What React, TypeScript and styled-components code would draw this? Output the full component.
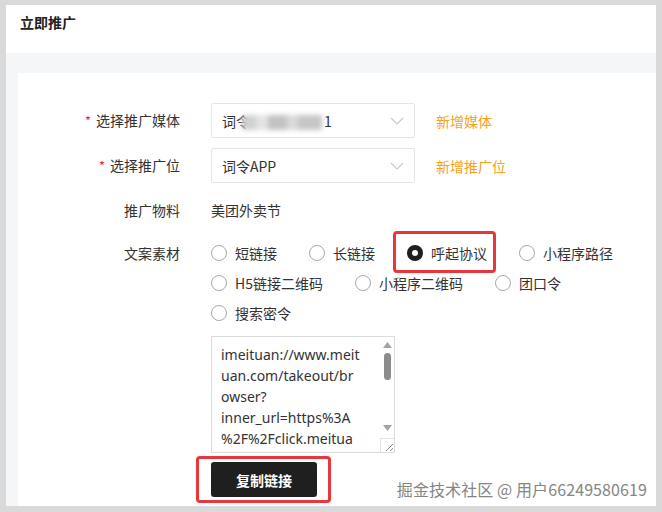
import styled, { createGlobalStyle } from 'styled-components'

const GlobalStyle = createGlobalStyle`
  html, body {
    margin: 0;
    padding: 0;
    background: #d9d9d9;
  }
  body {
    font-family: "Noto Sans CJK SC", "Noto Sans", sans-serif;
    font-size: 14px;
    color: #333;
  }
  * { box-sizing: border-box; }
`

const Window = styled.div`
  position: relative;
  margin: 5px 6px 0 6px;
  height: 501px;
  display: flex;
  flex-direction: column;
  background: #f5f6f7;
`

const Header = styled.header`
  height: 48px;
  flex: none;
  background: #fff;
  padding: 7px 0 0 14px;

  h1 {
    margin: 0;
    font-size: 14px;
    line-height: 20px;
    font-weight: 700;
    color: #222;
  }
`

const Body = styled.div`
  flex: 1;
  display: flex;
  padding: 20px 0 0 12px;
`

const Card = styled.section`
  flex: 1;
  background: #fff;
  padding-top: 30px;
`

const Form = styled.div`
  display: grid;
  grid-template-columns: 162px 1fr;
  column-gap: 31px;
  row-gap: 10px;
  align-items: start;
`

const Label = styled.div<{ $tight?: boolean }>`
  text-align: right;
  line-height: ${({ $tight }) => ($tight ? '30px' : '35px')};
  color: #333;
  white-space: nowrap;
`

const Required = styled.span`
  color: #f5222d;
  margin-right: 5px;
  font-size: 13px;
`

const Control = styled.div`
  display: flex;
  align-items: center;
  gap: 21px;
`

const Select = styled.div`
  width: 204px;
  height: 35px;
  border: 1px solid #e6e6e6;
  border-radius: 2px;
  padding: 0 10px;
  display: flex;
  align-items: center;
  justify-content: space-between;
  color: #333;
`

const Blurred = styled.span`
  display: inline-block;
  width: 80px;
  height: 15px;
  margin: 0 2px 0 -8px;
  vertical-align: middle;
  background: linear-gradient(90deg, #d0d0d0 0 18%, #e4e4e4 18% 32%, #c2c2c2 32% 56%, #dadada 56% 70%, #c6c6c6 70% 100%);
  filter: blur(2.5px);
`

const AddLink = styled.a`
  color: #f7a21b;
  text-decoration: none;
  cursor: pointer;
`

const Value = styled.div`
  line-height: 35px;
  color: #333;
`

const Stack = styled.div`
  display: flex;
  flex-direction: column;
  align-items: flex-start;
`

const RadioGroup = styled.div`
  width: 432px;
  display: flex;
  flex-wrap: wrap;
  column-gap: 32px;
`

const RadioItem = styled.label<{ $marked?: boolean }>`
  position: relative;
  display: inline-flex;
  align-items: center;
  gap: 8px;
  height: 30px;
  color: #333;
  white-space: nowrap;

  ${({ $marked }) =>
    $marked &&
    `
    &::before {
      content: '';
      position: absolute;
      top: -7px;
      bottom: -5px;
      left: -14px;
      right: -9px;
      border: 3px solid #e8363c;
      border-radius: 4px;
    }
  `}
`

const RadioDot = styled.span<{ $checked?: boolean }>`
  width: 16px;
  height: 16px;
  border-radius: 50%;
  background: #fff;
  border: ${({ $checked }) => ($checked ? '5px solid #1f1f1f' : '1px solid #a8a8a8')};
`

const TextBox = styled.div`
  margin-top: 8px;
  width: 184px;
  height: 117px;
  border: 1px solid #dcdcdc;
  display: flex;
`

const TextLines = styled.div`
  flex: 1;
  padding: 7px 0 0 9px;
  font-family: "Noto Sans", "Noto Sans CJK SC", sans-serif;
  font-size: 14px;
  line-height: 21px;
  color: #333;
  overflow: hidden;
  white-space: nowrap;
`

const ScrollTrack = styled.div`
  width: 14px;
  display: flex;
  flex-direction: column;
  align-items: center;
`

const Arrow = styled.div`
  height: 16px;
  display: flex;
  align-items: center;
  justify-content: center;
`

const Thumb = styled.div`
  width: 7px;
  height: 27px;
  border-radius: 4px;
  background: #8c8c8c;
`

const Spacer = styled.div`
  flex: 1;
`

const Grip = styled.div`
  width: 14px;
  height: 14px;
  margin-top: 2px;
  border-top: 1px solid #e2e2e2;
  border-left: 1px solid #e2e2e2;
  display: flex;
  align-items: flex-end;
  justify-content: flex-end;
`

const CopyButton = styled.button`
  position: relative;
  margin-top: 9px;
  width: 106px;
  height: 35px;
  border: none;
  border-radius: 3px;
  background: #1f1f1f;
  color: #fff;
  font-family: inherit;
  font-size: 14px;
  font-weight: 700;
  cursor: pointer;

  &::before {
    content: '';
    position: absolute;
    top: -6px;
    bottom: -6px;
    left: -15px;
    right: -14px;
    border: 3px solid #e8363c;
    border-radius: 4px;
  }
`

const Watermark = styled.div`
  position: absolute;
  right: 9px;
  bottom: 7px;
  font-size: 16px;
  line-height: 20px;
  color: #858585;
  text-shadow: 0 0 2px #fff, 0 0 1px #fff;
  letter-spacing: 0.1px;
`

function Chevron() {
  return (
    <svg width="14" height="8" viewBox="0 0 14 8">
      <polyline points="1,1 7,7 13,1" fill="none" stroke="#c8c8c8" strokeWidth="1.1" />
    </svg>
  )
}

const radios = [
  { label: '短链接' },
  { label: '长链接' },
  { label: '呼起协议', checked: true },
  { label: '小程序路径' },
  { label: 'H5链接二维码' },
  { label: '小程序二维码' },
  { label: '团口令' },
  { label: '搜索密令' },
]

const linkLines = [
  'imeituan://www.meit',
  'uan.com/takeout/br',
  'owser?',
  'inner_url=https%3A',
  '%2F%2Fclick.meitua',
]

export default function App() {
  return (
    <>
      <GlobalStyle />
      <Window>
        <Header>
          <h1>立即推广</h1>
        </Header>
        <Body>
          <Card>
            <Form>
              <Label>
                <Required>*</Required>选择推广媒体
              </Label>
              <Control>
                <Select>
                  <span>
                    词令<Blurred />1
                  </span>
                  <Chevron />
                </Select>
                <AddLink>新增媒体</AddLink>
              </Control>

              <Label>
                <Required>*</Required>选择推广位
              </Label>
              <Control>
                <Select>
                  <span>词令APP</span>
                  <Chevron />
                </Select>
                <AddLink>新增推广位</AddLink>
              </Control>

              <Label>推广物料</Label>
              <Value>美团外卖节</Value>

              <Label $tight>文案素材</Label>
              <Stack>
                <RadioGroup>
                  {radios.map((r) => (
                    <RadioItem key={r.label} $marked={r.checked}>
                      <RadioDot $checked={r.checked} />
                      {r.label}
                    </RadioItem>
                  ))}
                </RadioGroup>
                <TextBox>
                  <TextLines>
                    {linkLines.map((l) => (
                      <div key={l}>{l}</div>
                    ))}
                  </TextLines>
                  <ScrollTrack>
                    <Arrow>
                      <svg width="9" height="6" viewBox="0 0 9 6">
                        <polygon points="0,6 4.5,0 9,6" fill="#a3a3a3" />
                      </svg>
                    </Arrow>
                    <Thumb />
                    <Spacer />
                    <Arrow>
                      <svg width="9" height="6" viewBox="0 0 9 6">
                        <polygon points="0,0 9,0 4.5,6" fill="#a3a3a3" />
                      </svg>
                    </Arrow>
                    <Grip>
                      <svg width="9" height="9" viewBox="0 0 9 9">
                        <line x1="1" y1="8" x2="8" y2="1" stroke="#8a8a8a" strokeWidth="1" />
                        <line x1="5" y1="8" x2="8" y2="5" stroke="#8a8a8a" strokeWidth="1" />
                      </svg>
                    </Grip>
                  </ScrollTrack>
                </TextBox>
                <CopyButton type="button">复制链接</CopyButton>
              </Stack>
            </Form>
          </Card>
        </Body>
        <Watermark>掘金技术社区 @ 用户66249580619</Watermark>
      </Window>
    </>
  )
}
